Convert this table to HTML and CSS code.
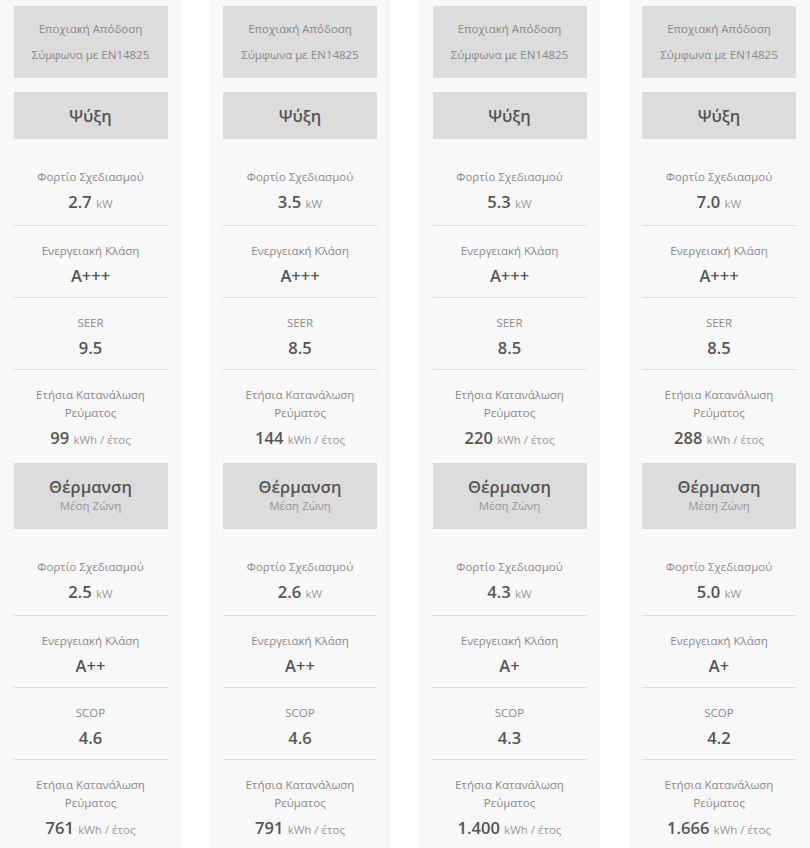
FILE: index.html
```html
<!DOCTYPE html>
<html lang="el">
<head>
<meta charset="utf-8">
<link rel="stylesheet" href="styles.css">
</head>
<body>
<div class="grid">
  <div class="col">
    <div class="head">Εποχιακή Απόδοση<br>Σύμφωνα με EN14825</div>
    <div class="section">Ψύξη</div>
    <div class="row"><div class="label">Φορτίο Σχεδιασμού</div><div class="value">2.7 <span class="unit">kW</span></div></div>
    <div class="row"><div class="label">Ενεργειακή Κλάση</div><div class="value cls">A+++</div></div>
    <div class="row"><div class="label">SEER</div><div class="value">9.5</div></div>
    <div class="row last"><div class="label">Ετήσια Κατανάλωση<br>Ρεύματος</div><div class="value">99 <span class="unit">kWh / έτος</span></div></div>
    <div class="section tall">Θέρμανση<div class="sub">Μέση Ζώνη</div></div>
    <div class="row"><div class="label">Φορτίο Σχεδιασμού</div><div class="value">2.5 <span class="unit">kW</span></div></div>
    <div class="row"><div class="label">Ενεργειακή Κλάση</div><div class="value cls">A++</div></div>
    <div class="row"><div class="label">SCOP</div><div class="value">4.6</div></div>
    <div class="row last"><div class="label">Ετήσια Κατανάλωση<br>Ρεύματος</div><div class="value">761 <span class="unit">kWh / έτος</span></div></div>
  </div>
  <div class="col">
    <div class="head">Εποχιακή Απόδοση<br>Σύμφωνα με EN14825</div>
    <div class="section">Ψύξη</div>
    <div class="row"><div class="label">Φορτίο Σχεδιασμού</div><div class="value">3.5 <span class="unit">kW</span></div></div>
    <div class="row"><div class="label">Ενεργειακή Κλάση</div><div class="value cls">A+++</div></div>
    <div class="row"><div class="label">SEER</div><div class="value">8.5</div></div>
    <div class="row last"><div class="label">Ετήσια Κατανάλωση<br>Ρεύματος</div><div class="value">144 <span class="unit">kWh / έτος</span></div></div>
    <div class="section tall">Θέρμανση<div class="sub">Μέση Ζώνη</div></div>
    <div class="row"><div class="label">Φορτίο Σχεδιασμού</div><div class="value">2.6 <span class="unit">kW</span></div></div>
    <div class="row"><div class="label">Ενεργειακή Κλάση</div><div class="value cls">A++</div></div>
    <div class="row"><div class="label">SCOP</div><div class="value">4.6</div></div>
    <div class="row last"><div class="label">Ετήσια Κατανάλωση<br>Ρεύματος</div><div class="value">791 <span class="unit">kWh / έτος</span></div></div>
  </div>
  <div class="col">
    <div class="head">Εποχιακή Απόδοση<br>Σύμφωνα με EN14825</div>
    <div class="section">Ψύξη</div>
    <div class="row"><div class="label">Φορτίο Σχεδιασμού</div><div class="value">5.3 <span class="unit">kW</span></div></div>
    <div class="row"><div class="label">Ενεργειακή Κλάση</div><div class="value cls">A+++</div></div>
    <div class="row"><div class="label">SEER</div><div class="value">8.5</div></div>
    <div class="row last"><div class="label">Ετήσια Κατανάλωση<br>Ρεύματος</div><div class="value">220 <span class="unit">kWh / έτος</span></div></div>
    <div class="section tall">Θέρμανση<div class="sub">Μέση Ζώνη</div></div>
    <div class="row"><div class="label">Φορτίο Σχεδιασμού</div><div class="value">4.3 <span class="unit">kW</span></div></div>
    <div class="row"><div class="label">Ενεργειακή Κλάση</div><div class="value cls">A+</div></div>
    <div class="row"><div class="label">SCOP</div><div class="value">4.3</div></div>
    <div class="row last"><div class="label">Ετήσια Κατανάλωση<br>Ρεύματος</div><div class="value">1.400 <span class="unit">kWh / έτος</span></div></div>
  </div>
  <div class="col">
    <div class="head">Εποχιακή Απόδοση<br>Σύμφωνα με EN14825</div>
    <div class="section">Ψύξη</div>
    <div class="row"><div class="label">Φορτίο Σχεδιασμού</div><div class="value">7.0 <span class="unit">kW</span></div></div>
    <div class="row"><div class="label">Ενεργειακή Κλάση</div><div class="value cls">A+++</div></div>
    <div class="row"><div class="label">SEER</div><div class="value">8.5</div></div>
    <div class="row last"><div class="label">Ετήσια Κατανάλωση<br>Ρεύματος</div><div class="value">288 <span class="unit">kWh / έτος</span></div></div>
    <div class="section tall">Θέρμανση<div class="sub">Μέση Ζώνη</div></div>
    <div class="row"><div class="label">Φορτίο Σχεδιασμού</div><div class="value">5.0 <span class="unit">kW</span></div></div>
    <div class="row"><div class="label">Ενεργειακή Κλάση</div><div class="value cls">A+</div></div>
    <div class="row"><div class="label">SCOP</div><div class="value">4.2</div></div>
    <div class="row last"><div class="label">Ετήσια Κατανάλωση<br>Ρεύματος</div><div class="value">1.666 <span class="unit">kWh / έτος</span></div></div>
  </div>
</div>
</body>
</html>
```
FILE: styles.css
```css
html, body {
  margin: 0;
  padding: 0;
  background: #ffffff;
  overflow: hidden;
}
body {
  font-family: "Open Sans", "Noto Sans", sans-serif;
  color: #555;
}
.grid {
  display: grid;
  grid-template-columns: repeat(4, 181px);
  column-gap: 28.5px;
  height: 848px;
  overflow: hidden;
}
.col {
  background: #f8f8f8;
  padding: 6px 13.5px 0;
  text-align: center;
}
.head {
  background: #dcdcdc;
  color: #8a8a8a;
  font-size: 11.5px;
  line-height: 26px;
  padding: 10px 0;
  margin-bottom: 14px;
}
.section {
  background: #dcdcdc;
  color: #555;
  font-size: 16.5px;
  font-weight: 600;
  line-height: 47px;
  height: 47px;
  margin-bottom: 13px;
}
.section.tall {
  height: auto;
  line-height: 22px;
  padding: 13px 0 15px;
}
.sub {
  font-size: 11.5px;
  font-weight: 400;
  color: #999;
  line-height: 16px;
}
.row {
  padding: 16px 0 9px;
  border-bottom: 1px solid #dedede;
}
.row.last {
  border-bottom: none;
  padding-bottom: 11px;
}
.label {
  font-size: 11.5px;
  line-height: 18px;
  color: #8a8a8a;
}
.value {
  margin-top: 4px;
  font-size: 16.5px;
  line-height: 24px;
  font-weight: 600;
  color: #555;
}
.unit {
  font-size: 11.5px;
  font-weight: 400;
  color: #999;
}
```
